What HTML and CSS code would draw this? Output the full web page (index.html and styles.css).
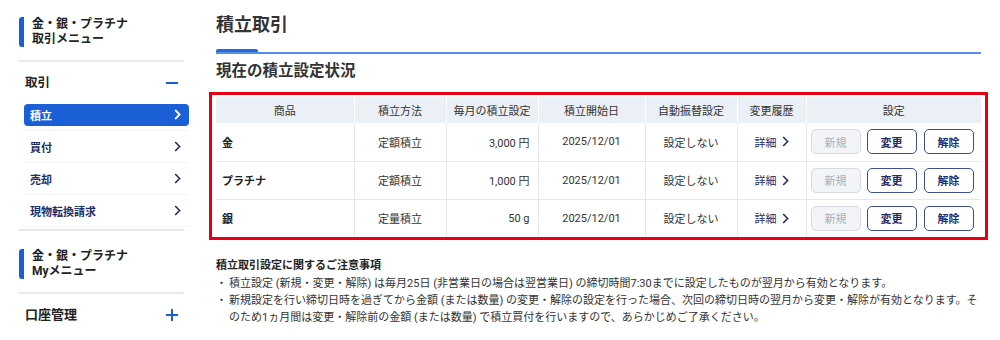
FILE: index.html
```html
<!DOCTYPE html>
<html lang="ja">
<head>
<meta charset="utf-8">
<title>積立取引</title>
<link rel="stylesheet" href="styles.css">
</head>
<body>
<div class="page">
  <aside class="side">
    <div class="side-title">金・銀・プラチナ<br>取引メニュー</div>
    <div class="sep"></div>
    <div class="group-head">
      <span>取引</span>
      <svg class="pm" width="14" height="14" viewBox="0 0 14 14"><path d="M1 7H13" stroke="#1a5fd6" stroke-width="2"/></svg>
    </div>
    <ul class="menu">
      <li class="mi active"><div class="pill"><span>積立</span><svg width="7" height="11" viewBox="0 0 7 11"><path d="M1.2 1L5.6 5.5L1.2 10" fill="none" stroke="#fff" stroke-width="1.8"/></svg></div></li>
      <li class="mi"><span>買付</span><svg width="7" height="11" viewBox="0 0 7 11"><path d="M1.2 1L5.6 5.5L1.2 10" fill="none" stroke="#1e2d6b" stroke-width="1.6"/></svg></li>
      <li class="mi"><span>売却</span><svg width="7" height="11" viewBox="0 0 7 11"><path d="M1.2 1L5.6 5.5L1.2 10" fill="none" stroke="#1e2d6b" stroke-width="1.6"/></svg></li>
      <li class="mi"><span>現物転換請求</span><svg width="7" height="11" viewBox="0 0 7 11"><path d="M1.2 1L5.6 5.5L1.2 10" fill="none" stroke="#1e2d6b" stroke-width="1.6"/></svg></li>
    </ul>
    <div class="sep"></div>
    <div class="side-title second">金・銀・プラチナ<br>Myメニュー</div>
    <div class="sep"></div>
    <div class="group-head big">
      <span>口座管理</span>
      <svg class="pm" width="14" height="14" viewBox="0 0 14 14"><path d="M1 7H13M7 1V13" stroke="#1a5fd6" stroke-width="2"/></svg>
    </div>
    <div class="sep"></div>
  </aside>

  <main class="main">
    <h1 class="title">積立取引</h1>
    <div class="tabline"><span class="tabmark"></span></div>
    <h2 class="subtitle">現在の積立設定状況</h2>

    <div class="highlight">
      <table class="grid">
        <colgroup>
          <col class="c1"><col class="c2"><col class="c3"><col class="c4"><col class="c5"><col class="c6"><col class="c7">
        </colgroup>
        <thead>
          <tr><th>商品</th><th>積立方法</th><th>毎月の積立設定</th><th>積立開始日</th><th>自動振替設定</th><th>変更履歴</th><th>設定</th></tr>
        </thead>
        <tbody>
          <tr>
            <td class="name">金</td><td class="ctr">定額積立</td><td class="num">3,000 円</td><td class="ctr">2025/12/01</td><td class="ctr">設定しない</td>
            <td class="ctr"><span class="detail">詳細<svg width="7" height="11" viewBox="0 0 7 11"><path d="M1.2 1L5.6 5.5L1.2 10" fill="none" stroke="#1e2d6b" stroke-width="1.6"/></svg></span></td>
            <td><div class="btns"><button class="btn dis">新規</button><button class="btn">変更</button><button class="btn">解除</button></div></td>
          </tr>
          <tr>
            <td class="name">プラチナ</td><td class="ctr">定額積立</td><td class="num">1,000 円</td><td class="ctr">2025/12/01</td><td class="ctr">設定しない</td>
            <td class="ctr"><span class="detail">詳細<svg width="7" height="11" viewBox="0 0 7 11"><path d="M1.2 1L5.6 5.5L1.2 10" fill="none" stroke="#1e2d6b" stroke-width="1.6"/></svg></span></td>
            <td><div class="btns"><button class="btn dis">新規</button><button class="btn">変更</button><button class="btn">解除</button></div></td>
          </tr>
          <tr>
            <td class="name">銀</td><td class="ctr">定量積立</td><td class="num">50 g</td><td class="ctr">2025/12/01</td><td class="ctr">設定しない</td>
            <td class="ctr"><span class="detail">詳細<svg width="7" height="11" viewBox="0 0 7 11"><path d="M1.2 1L5.6 5.5L1.2 10" fill="none" stroke="#1e2d6b" stroke-width="1.6"/></svg></span></td>
            <td><div class="btns"><button class="btn dis">新規</button><button class="btn">変更</button><button class="btn">解除</button></div></td>
          </tr>
        </tbody>
      </table>
    </div>

    <section class="notes">
      <h3 class="notes-title">積立取引設定に関するご注意事項</h3>
      <ul class="notes-list">
        <li>積立設定 (新規・変更・解除) は毎月25日 (非営業日の場合は翌営業日) の締切時間7:30までに設定したものが翌月から有効となります。</li>
        <li>新規設定を行い締切日時を過ぎてから金額 (または数量) の変更・解除の設定を行った場合、次回の締切日時の翌月から変更・解除が有効となります。そのため1ヵ月間は変更・解除前の金額 (または数量) で積立買付を行いますので、あらかじめご了承ください。</li>
      </ul>
    </section>
  </main>
</div>
</body>
</html>
```

FILE: styles.css
```css
* { box-sizing: border-box; }
html, body { margin: 0; padding: 0; background: #fff; }
body {
  font-family: Roboto, "Noto Sans CJK JP", sans-serif;
  color: #333;
  width: 1000px;
  height: 340px;
  overflow: hidden;
}
.page {
  display: flex;
  gap: 27px;
  padding-left: 19px;
}

/* sidebar */
.side {
  width: 170px;
  flex: none;
  padding-top: 17px;
}
.side-title {
  border-left: 5px solid #1a5fd6;
  border-radius: 3px 0 0 3px;
  padding-left: 8px;
  font-size: 12px;
  font-weight: 700;
  line-height: 15px;
  color: #222;
}
.side-title.second { margin-top: 18px; }
.sep {
  height: 2px;
  background: #e6e8ed;
  width: 165px;
  margin-top: 13px;
}
.menu + .sep { margin-top: 2px; }
.group-head {
  display: flex;
  justify-content: space-between;
  align-items: center;
  width: 165px;
  padding: 12px 5px 7px 6px;
  font-size: 12.5px;
  font-weight: 700;
  line-height: 18px;
  color: #222;
}
.group-head.big {
  padding: 12px 5px 10px 6px;
  font-size: 13px;
}
.pm { display: block; }
.menu {
  list-style: none;
  margin: 0 0 0 5px;
  padding: 0;
  width: 165px;
}
.mi {
  height: 32px;
  border-bottom: 1px solid #f0f2f6;
  display: flex;
  align-items: center;
  justify-content: space-between;
  padding: 0 8px 0 6px;
  font-size: 11px;
  font-weight: 700;
  color: #1e2d6b;
}
.mi svg { display: block; }
.mi.active { padding: 0; }
.pill {
  width: 100%;
  height: 22px;
  background: #1a5fd6;
  border-radius: 4px;
  color: #fff;
  display: flex;
  align-items: center;
  justify-content: space-between;
  padding: 0 8px 0 6px;
}

/* main */
.main {
  width: 765px;
  flex: none;
}
.title {
  margin: 0;
  padding-top: 12px;
  font-size: 18px;
  line-height: 26px;
  font-weight: 700;
  color: #333;
}
.tabline {
  margin-top: 10px;
  border-bottom: 2px solid #5590e6;
  height: 6px;
  display: flex;
  align-items: flex-end;
}
.tabmark {
  display: block;
  width: 42px;
  height: 3px;
  background: #2a6ad8;
  border-radius: 2px 2px 0 0;
}
.subtitle {
  margin: 7px 0 0;
  font-size: 15.5px;
  line-height: 20px;
  font-weight: 700;
  color: #333;
}
.highlight {
  margin: 11px 0 0 -7px;
  width: 779px;
  border: 3px solid #e60012;
  padding: 2px 4px 0 4px;
}
.grid {
  width: 765px;
  border-collapse: collapse;
  table-layout: fixed;
  font-size: 11px;
}
.c1 { width: 138px; }
.c2 { width: 92px; }
.c3 { width: 92px; }
.c4 { width: 107px; }
.c5 { width: 92px; }
.c6 { width: 69px; }
.c7 { width: 175px; }
.grid th {
  background: #ebeff6;
  height: 26px;
  font-weight: 400;
  color: #333;
  text-align: center;
  border-left: 1px solid #fff;
  padding: 0;
}
.grid th:first-child { border-left: none; }
.grid td {
  height: 38px;
  padding: 0;
  border-left: 1px solid #e4e7ee;
  border-top: 1px solid #e4e7ee;
  color: #333;
}
.grid tbody tr:first-child td { border-top: none; }
.grid td:first-child { border-left: none; }
.grid .name {
  padding-left: 6px;
  font-weight: 700;
  color: #222;
}
.grid .ctr { text-align: center; }
.grid .num { text-align: right; padding-right: 8px; }
.detail {
  display: inline-flex;
  align-items: center;
  gap: 5px;
  color: #1e2d6b;
}
.detail svg { display: block; }
.btns {
  display: flex;
  gap: 6px;
  padding-left: 4px;
}
.btn {
  width: 50px;
  height: 25px;
  border: 1px solid #3d4d8d;
  border-radius: 5px;
  background: #fff;
  font-family: Roboto, "Noto Sans CJK JP", sans-serif;
  font-size: 11px;
  font-weight: 700;
  color: #1e2d6b;
  padding: 0;
}
.btn + .btn + .btn { margin-left: 1px; }
.btn.dis {
  background: #f3f4f7;
  border-color: #d6dae3;
  color: #a8aebb;
  font-weight: 400;
}

/* notes */
.notes { margin-top: 19px; }
.notes-title {
  margin: 0;
  font-size: 11px;
  line-height: 14px;
  font-weight: 700;
  color: #222;
}
.notes-list {
  list-style: none;
  margin: 2px 0 0;
  padding: 0;
  font-size: 11px;
  line-height: 17px;
  color: #333;
}
.notes-list li {
  position: relative;
  padding-left: 13px;
}
.notes-list li::before {
  content: "・";
  position: absolute;
  left: 0;
  top: 0;
}
```
